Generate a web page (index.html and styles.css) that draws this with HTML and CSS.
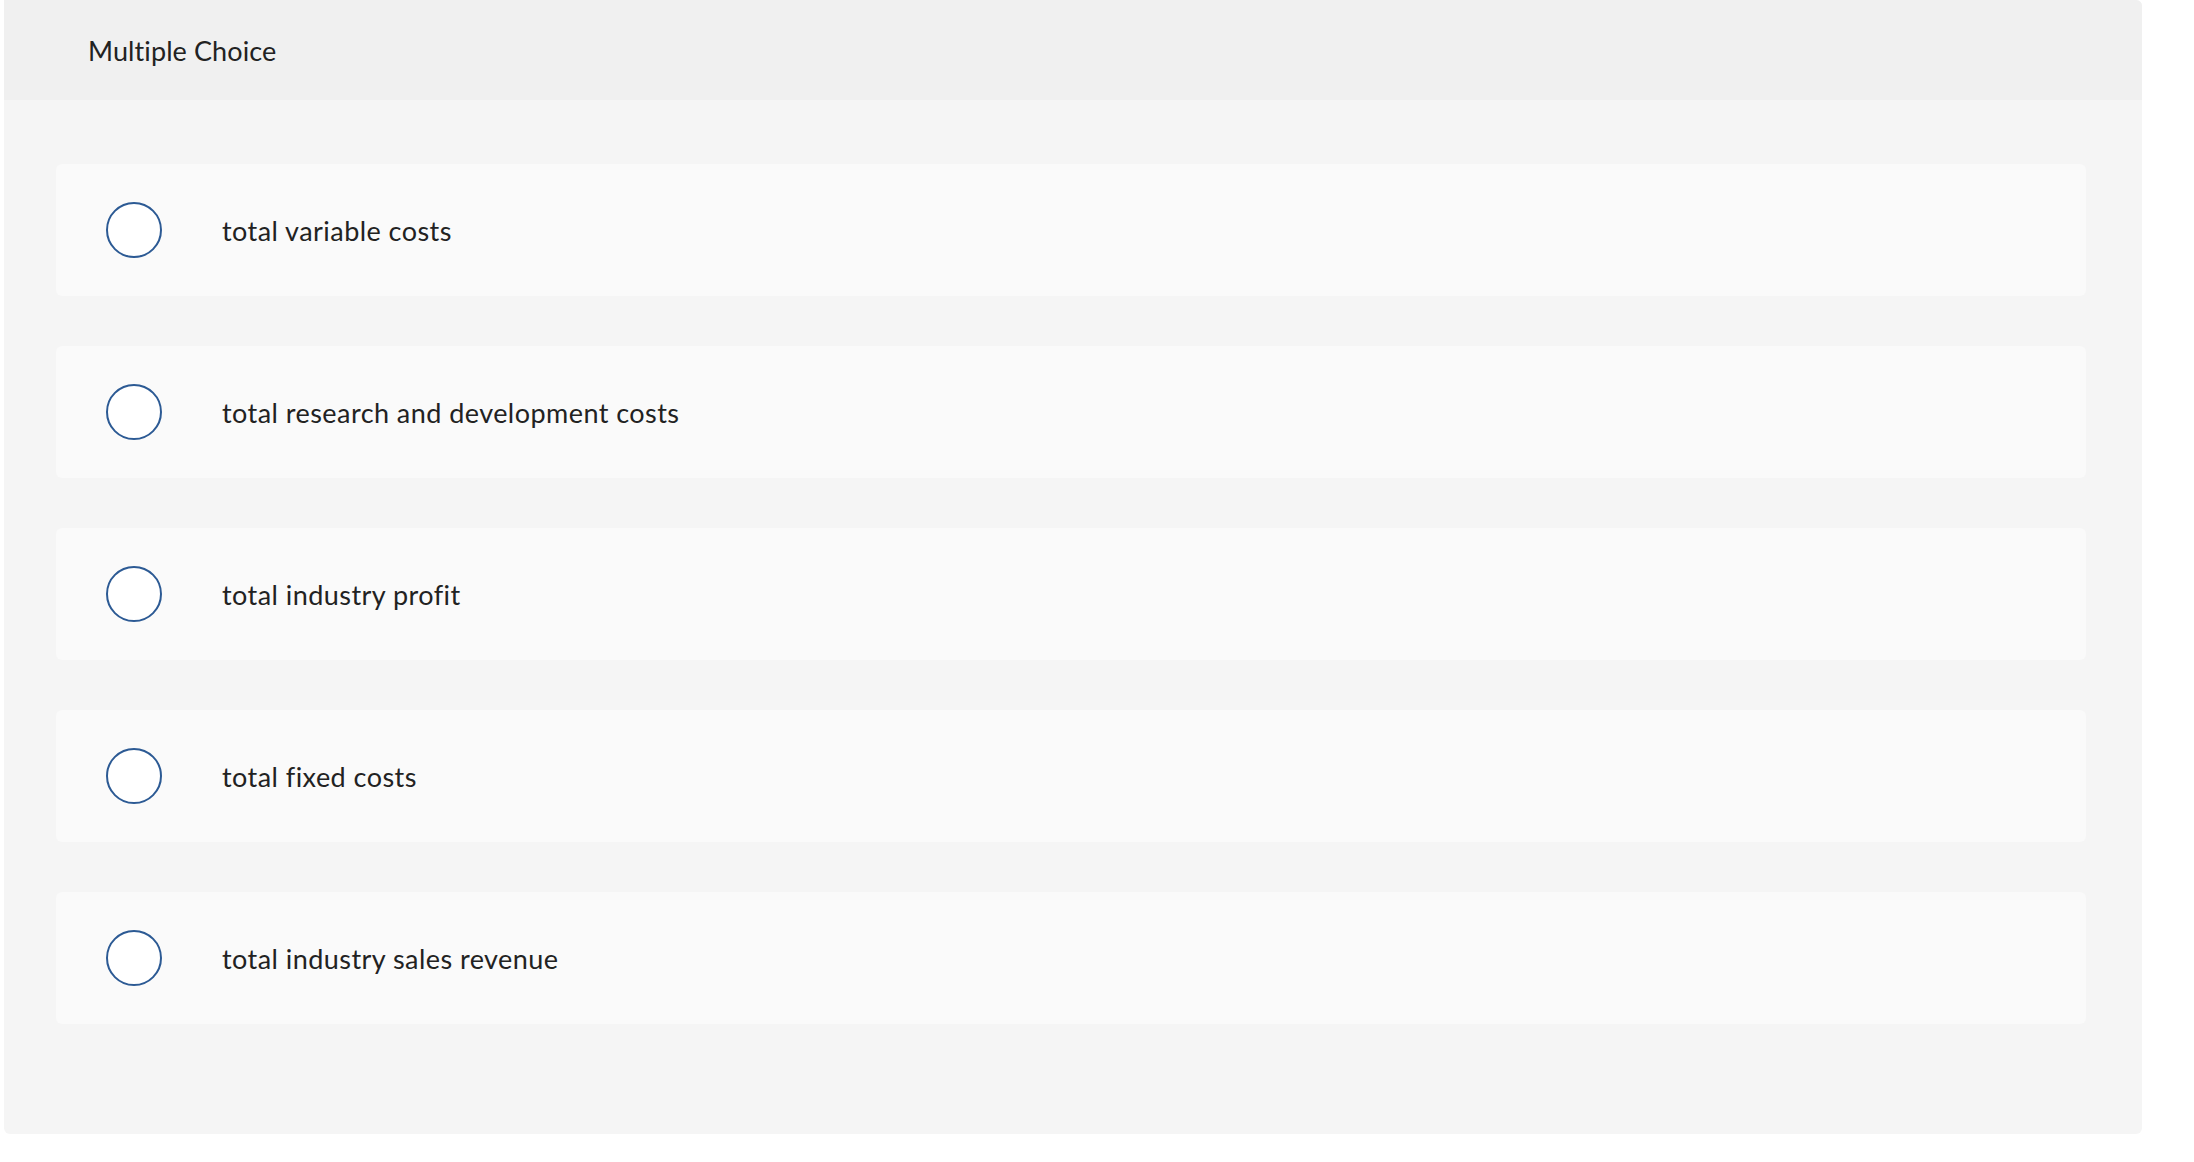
FILE: index.html
```html
<!DOCTYPE html>
<html lang="en">
	<head>
		<meta charset="UTF-8">
		<title>Multiple Choice</title>
		<link rel="stylesheet" href="styles.css">
	</head>
	<body>
		<section class="question">
			<header class="question-head">Multiple Choice</header>
			<div class="choices">
				<label class="choice">
					<span class="radio"></span>
					<span class="choice-text">total variable costs</span>
				</label>
				<label class="choice">
					<span class="radio"></span>
					<span class="choice-text">total research and development costs</span>
				</label>
				<label class="choice">
					<span class="radio"></span>
					<span class="choice-text">total industry profit</span>
				</label>
				<label class="choice">
					<span class="radio"></span>
					<span class="choice-text">total fixed costs</span>
				</label>
				<label class="choice">
					<span class="radio"></span>
					<span class="choice-text">total industry sales revenue</span>
				</label>
			</div>
		</section>
	</body>
</html>
```

FILE: styles.css
```css
html, body {
	margin: 0;
	padding: 0;
	background: #fff;
	font-family: Lato, 'Open Sans', Arial, sans-serif;
	color: #222;
}
.question {
	margin-left: 4px;
	width: 2138px;
	background: #f5f5f5;
	border-radius: 0 6px 6px 6px;
	overflow: hidden;
}
.question-head {
	height: 100px;
	display: flex;
	align-items: center;
	padding-left: 84px;
	background: #f0f0f0;
	font-size: 27px;
	letter-spacing: 0.1px;
}
.choices {
	display: flex;
	flex-direction: column;
	gap: 50px;
	padding: 64px 56px 110px 52px;
}
.choice {
	height: 132px;
	display: flex;
	align-items: center;
	gap: 60px;
	padding-left: 50px;
	background: #fafafa;
	border-radius: 6px;
}
.radio {
	width: 52px;
	height: 52px;
	border: 2px solid #2c5a94;
	border-radius: 50%;
	background: #fff;
	flex: none;
}
.choice-text {
	font-size: 27px;
	letter-spacing: 0.45px;
	font-variant-ligatures: none;
}
```
